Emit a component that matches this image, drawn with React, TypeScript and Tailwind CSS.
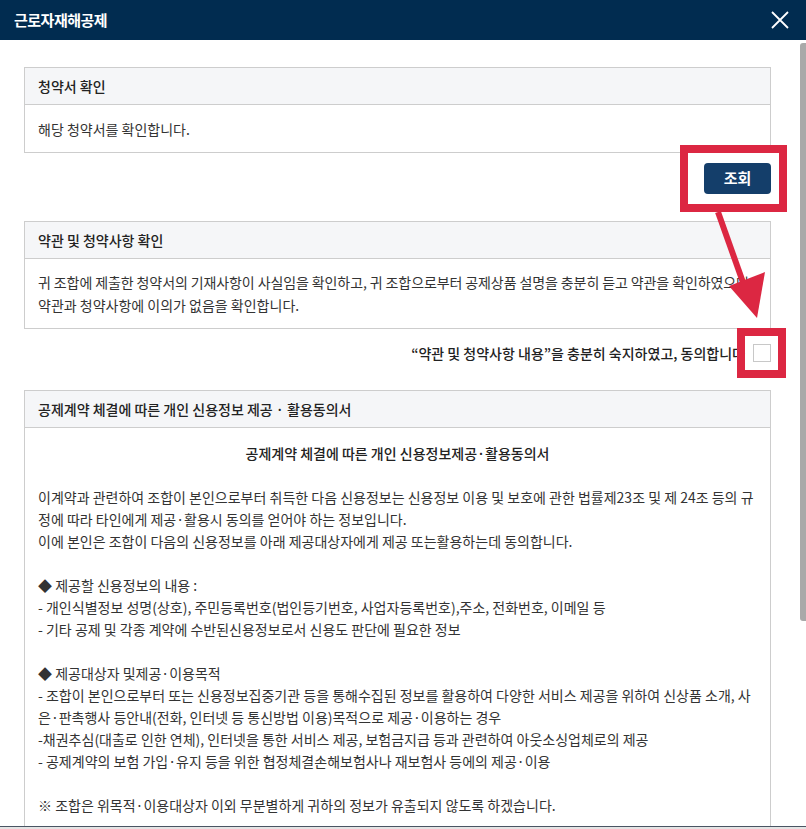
import React from 'react';

const Box = ({ title, children }: { title: string; children: React.ReactNode }) => (
  <div className="border border-[#cdcdcd] bg-white">
    <div className="flex h-[37px] items-center border-b border-[#cdcdcd] bg-[#f5f6f8] px-[13px] text-[14px] font-medium text-[#222]">
      {title}
    </div>
    {children}
  </div>
);

const consentLines: string[] = [
  '이계약과 관련하여 조합이 본인으로부터 취득한 다음 신용정보는 신용정보 이용 및 보호에 관한 법률제23조 및 제 24조 등의 규',
  '정에 따라 타인에게 제공·활용시 동의를 얻어야 하는 정보입니다.',
  '이에 본인은 조합이 다음의 신용정보를 아래 제공대상자에게 제공 또는활용하는데 동의합니다.',
  '',
  '◆ 제공할 신용정보의 내용 :',
  '- 개인식별정보 성명(상호), 주민등록번호(법인등기번호, 사업자등록번호),주소, 전화번호, 이메일 등',
  '- 기타 공제 및 각종 계약에 수반된신용정보로서 신용도 판단에 필요한 정보',
  '',
  '◆ 제공대상자 및제공·이용목적',
  '- 조합이 본인으로부터 또는 신용정보집중기관 등을 통해수집된 정보를 활용하여 다양한 서비스 제공을 위하여 신상품 소개, 사',
  '은·판촉행사 등안내(전화, 인터넷 등 통신방법 이용)목적으로 제공·이용하는 경우',
  '-채권추심(대출로 인한 연체), 인터넷을 통한 서비스 제공, 보험금지급 등과 관련하여 아웃소싱업체로의 제공',
  '- 공제계약의 보험 가입·유지 등을 위한 협정체결손해보험사나 재보험사 등에의 제공·이용',
  '',
  '※ 조합은 위목적·이용대상자 이외 무분별하게 귀하의 정보가 유출되지 않도록 하겠습니다.',
];

export default function App() {
  return (
    <div className="relative h-[829px] w-[806px] overflow-hidden bg-white font-['Noto_Sans_CJK_KR','Noto_Sans',sans-serif]">
      {/* 상단 타이틀 바 */}
      <div className="flex h-[40px] items-center justify-between bg-[#012c50] pl-[14px] pr-[16px]">
        <h1 className="text-[15px] font-bold tracking-[-0.5px] text-white">근로자재해공제</h1>
        <button className="text-white" aria-label="닫기">
          <svg width="20" height="20" viewBox="0 0 20 20" fill="none" stroke="currentColor" strokeWidth="1.8">
            <path d="M2 2 L18 18 M18 2 L2 18" />
          </svg>
        </button>
      </div>

      <div className="flex h-[786px]">
        <div className="flex-1 overflow-hidden pl-[24px] pr-[26px] pt-[27px]">
          <Box title="청약서 확인">
            <div className="flex h-[47px] items-center px-[13px] pt-[1px] text-[14px] text-[#333]">
              해당 청약서를 확인합니다.
            </div>
          </Box>

          <div className="mt-[10px] flex justify-end">
            <button className="h-[31px] w-[67px] rounded-[4px] bg-[#143e6a] text-[15px] font-bold text-white">
              조회
            </button>
          </div>

          <div className="mt-[27px]">
            <Box title="약관 및 청약사항 확인">
              <div className="px-[13px] pb-[11px] pt-[12px] text-[14px] leading-[23px] text-[#333]">
                <div className="whitespace-nowrap tracking-[-0.1px]">
                  귀 조합에 제출한 청약서의 기재사항이 사실임을 확인하고, 귀 조합으로부터 공제상품 설명을 충분히 듣고 약관을 확인하였으며
                </div>
                <div className="whitespace-nowrap">약관과 청약사항에 이의가 없음을 확인합니다.</div>
              </div>
            </Box>
          </div>

          <div className="mt-[15px] flex h-[18px] items-center justify-end gap-[8px]">
            <span className="text-[14px] font-medium text-[#222]">
              “약관 및 청약사항 내용”을 충분히 숙지하였고, 동의합니다
            </span>
            <span className="h-[18px] w-[18px] border border-[#c8c8c8] bg-white" />
          </div>

          <div className="mt-[28px]">
            <Box title="공제계약 체결에 따른 개인 신용정보 제공 · 활용동의서">
              <div className="px-[13px] pt-[14px] text-[14px] leading-[22px] text-[#333]">
                <div className="text-center font-medium text-[#222]">공제계약 체결에 따른 개인 신용정보제공·활용동의서</div>
                <div className="h-[22px]" />
                {consentLines.map((line, i) =>
                  line ? (
                    <div key={i} className="whitespace-nowrap">
                      {line}
                    </div>
                  ) : (
                    <div key={i} className="h-[22px]" />
                  )
                )}
                <div className="h-[40px]" />
              </div>
            </Box>
          </div>
        </div>

        {/* 스크롤바 */}
        <div className="w-[9px] pt-[3px]">
          <div className="ml-auto h-[578px] w-[6px] rounded-l-[3px] bg-[#a9a9a9]" />
        </div>
      </div>

      <div className="h-[3px] border-t border-[#4a5563] bg-[#e4e4e4]" />

      {/* 안내용 빨간 표시 */}
      <svg className="pointer-events-none absolute inset-0" width="806" height="829" viewBox="0 0 806 829">
        <rect x="684" y="149" width="99" height="59" fill="none" stroke="#dc2742" strokeWidth="8" />
        <rect x="741" y="332" width="41" height="42" fill="none" stroke="#dc2742" strokeWidth="8" />
        <path d="M718 212 L745 288" stroke="#dc2742" strokeWidth="6" />
        <polygon points="757,318 729,286 765,272" fill="#dc2742" />
      </svg>
    </div>
  );
}
